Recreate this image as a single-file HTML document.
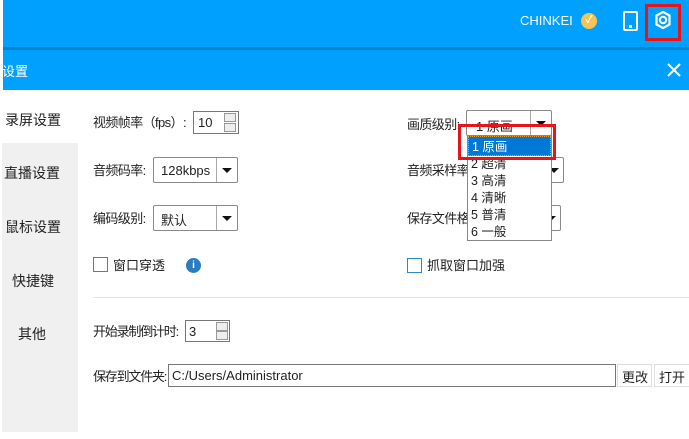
<!DOCTYPE html>
<html><head><meta charset="utf-8"><style>
*{margin:0;padding:0;box-sizing:border-box}
body{width:689px;height:439px;overflow:hidden;background:#fff;position:relative;font-family:"Liberation Sans","Noto Sans CJK SC",sans-serif;font-size:13px;color:#222}
.a{position:absolute;white-space:nowrap}
.l{letter-spacing:-0.6px;margin-top:-2px}
.box{position:absolute;border:1px solid #8a8a8a;background:#fff;border-radius:2px}
.cb{position:absolute;border-right:1px solid #aaa;top:0;bottom:0;width:0}
.tri{position:absolute;width:0;height:0;border-left:5px solid transparent;border-right:5px solid transparent;border-top:5px solid #111}
.spin{position:absolute;width:12px;height:9px;border:1px solid #999;background:#eee}
</style></head><body>
<div class="a" style="left:3px;top:0;width:686px;height:48px;background:#00a0fe"></div>
<div class="a" style="left:3px;top:47px;width:686px;height:3px;background:#0284cf"></div>
<div class="a" style="left:3px;top:50px;width:686px;height:40px;background:#00a0fe"></div>
<div class="a" style="left:520px;top:13px;color:#fff;font-size:13px">CHINKEI</div>
<div class="a" style="left:581px;top:13px;width:16px;height:16px;border-radius:50%;background:#f7c453;color:#fff;font-size:10px;text-align:center;line-height:16px;font-weight:bold">✓</div>
<div class="a" style="left:623px;top:11px;width:15px;height:20px;border:2px solid #fff;border-radius:2px"></div>
<div class="a" style="left:629px;top:25px;width:3px;height:3px;background:#fff"></div>
<svg class="a" style="left:652px;top:9px" width="22" height="22" viewBox="0 0 22 22"><path d="M11 3 L17.5 6.5 L17.5 15.5 L11 19 L4.5 15.5 L4.5 6.5 Z" fill="none" stroke="#fff" stroke-width="2.2" stroke-linejoin="round"/><circle cx="11" cy="11" r="3.2" fill="none" stroke="#fff" stroke-width="2"/></svg>
<div class="a" style="left:645px;top:4px;width:36px;height:37px;border:3px solid #e8141c"></div>
<div class="a" style="left:2px;top:61px;color:#fff;font-size:13px">设置</div>
<svg class="a" style="left:667px;top:63px" width="14" height="14"><path d="M1 1L13 13M13 1L1 13" stroke="#fff" stroke-width="2"/></svg>
<div class="a" style="left:2px;top:143px;width:76px;height:289px;background:#f0f0f0"></div>
<div class="a" style="left:5px;top:110px;font-size:14px">录屏设置</div>
<div class="a" style="left:4px;top:163px;font-size:14px">直播设置</div>
<div class="a" style="left:5px;top:217px;font-size:14px">鼠标设置</div>
<div class="a" style="left:12px;top:271px;font-size:14px">快捷键</div>
<div class="a" style="left:18px;top:324px;font-size:14px">其他</div>

<div class="a l" style="left:93px;top:114px">视频帧率（fps）:</div>
<div class="box" style="left:193px;top:111px;width:46px;height:23px;border-radius:0;border-color:#777"><span class="a" style="left:4px;top:3px">10</span><div class="spin" style="left:30px;top:1px"></div><div class="spin" style="left:30px;top:11px"></div></div>
<div class="a l" style="left:93px;top:162px">音频码率:</div>
<div class="box" style="left:153px;top:157px;width:85px;height:26px"><span class="a" style="left:7px;top:5px">128kbps</span><div class="cb" style="left:62px"></div><div class="tri" style="left:68px;top:10px"></div></div>
<div class="a l" style="left:93px;top:210px">编码级别:</div>
<div class="box" style="left:153px;top:205px;width:85px;height:26px"><span class="a" style="left:7px;top:4px">默认</span><div class="cb" style="left:62px"></div><div class="tri" style="left:68px;top:10px"></div></div>
<div class="a" style="left:93px;top:257px;width:15px;height:15px;border:1px solid #2a8ad8"></div>
<div class="a" style="left:113px;top:255px">窗口穿透</div>
<div class="a" style="left:186px;top:258px;width:15px;height:15px;border-radius:50%;background:#2a7dc0;color:#fff;font-size:10px;font-weight:bold;text-align:center;line-height:15px">i</div>
<div class="a" style="left:93px;top:297px;width:596px;height:1px;background:#e3e3e3"></div>
<div class="a l" style="left:93px;top:323px;letter-spacing:-1.2px">开始录制倒计时:</div>
<div class="box" style="left:185px;top:320px;width:45px;height:22px;border-radius:0;border-color:#777"><span class="a" style="left:3px;top:3px">3</span><div class="spin" style="left:30px;top:1px"></div><div class="spin" style="left:30px;top:10px"></div></div>
<div class="a l" style="left:93px;top:368px;letter-spacing:-1.2px">保存到文件夹:</div>
<div class="box" style="left:168px;top:364px;width:448px;height:23px;border-radius:0;border-color:#777"><span class="a" style="left:3px;top:3px">C:/Users/Administrator</span></div>
<div class="a" style="left:617px;top:364px;width:35px;height:23px;border:1px solid #ddd;padding:2px 4px">更改</div>
<div class="a" style="left:654px;top:364px;width:40px;height:23px;border:1px solid #ddd;padding:2px 4px">打开</div>

<div class="a l" style="left:407px;top:116px">画质级别:</div>
<div class="box" style="left:466px;top:110px;width:86px;height:26px"><span class="a" style="left:9px;top:5px">1 原画</span><div class="cb" style="left:63px"></div><div class="tri" style="left:69px;top:10px"></div></div>
<div class="a l" style="left:407px;top:162px">音频采样率</div>
<div class="box" style="left:520px;top:157px;width:44px;height:26px"><div class="tri" style="left:28px;top:10px"></div></div>
<div class="a l" style="left:407px;top:210px">保存文件格</div>
<div class="box" style="left:520px;top:205px;width:41px;height:26px"><div class="tri" style="left:25px;top:10px"></div></div>
<div class="a" style="left:467px;top:135px;width:85px;height:106px;border:1px solid #888;background:#fff;font-size:12.5px;line-height:17px">
<div style="background:#0078d7;color:#fff;padding-left:3px;height:20px;line-height:20px;border:1px dotted #f0a030">1 原画</div>
<div style="padding-left:3px">2 超清</div><div style="padding-left:3px">3 高清</div><div style="padding-left:3px">4 清晰</div><div style="padding-left:3px">5 普清</div><div style="padding-left:3px">6 一般</div></div>
<div class="a" style="left:458px;top:124px;width:98px;height:36px;border:3px solid #e8141c"></div>
<div class="a" style="left:407px;top:258px;width:15px;height:15px;border:1px solid #2a8ad8"></div>
<div class="a" style="left:427px;top:255px">抓取窗口加强</div>
</body></html>
